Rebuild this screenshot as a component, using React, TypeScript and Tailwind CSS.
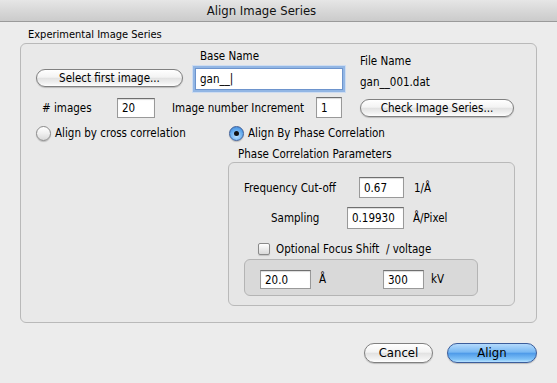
import type { ReactNode } from "react";

const font = { fontFamily: '"DejaVu Sans Condensed", "DejaVu Sans", "Liberation Sans", sans-serif' };

function AquaButton({ children, className = "", blue = false }: { children: ReactNode; className?: string; blue?: boolean }) {
  return (
    <div
      className={
        "flex shrink-0 items-center justify-center rounded-full border text-black shadow-[0_1px_1px_rgba(0,0,0,0.2)] " +
        (blue
          ? "border-[#3b5d9b] bg-[linear-gradient(#b4dafc,#78b8f3_45%,#4f9be9_52%,#7fc2f7_85%,#b8e2ff)] "
          : "border-[#808080] bg-[linear-gradient(#ffffff,#f3f3f3_45%,#e2e2e2_52%,#f3f3f3_85%,#ffffff)] ") +
        className
      }
    >
      {children}
    </div>
  );
}

function Field({ value, className = "", focused = false }: { value: string; className?: string; focused?: boolean }) {
  return (
    <div
      className={
        "flex shrink-0 items-center bg-white pl-[4px] text-black " +
        (focused
          ? "border border-[#6d94cd] shadow-[0_0_0_2px_#92b6e4,0_0_0_3px_#cddcf1] "
          : "border border-[#999999] border-t-[#6f6f6f] shadow-[inset_0_1px_1px_rgba(0,0,0,0.15)] ") +
        className
      }
    >
      {value}
    </div>
  );
}

function Radio({ on = false }: { on?: boolean }) {
  return (
    <div
      className={
        "flex h-[15px] w-[15px] shrink-0 items-center justify-center rounded-full border shadow-[0_1px_1px_rgba(0,0,0,0.2)] " +
        (on
          ? "border-[#3d5f99] bg-[radial-gradient(circle_at_50%_70%,#b9e1ff,#5ea7ec_60%,#3f7fcf)]"
          : "border-[#8a8a8a] bg-[linear-gradient(#ffffff,#efefef_50%,#d9d9d9)]")
      }
    >
      {on && <div className="h-[5px] w-[5px] rounded-full bg-[#111]" />}
    </div>
  );
}

export default function App() {
  return (
    <div className="flex h-[383px] w-[557px] flex-col overflow-hidden bg-[#ececec] text-[11.5px] leading-[14px] text-black" style={font}>
      <div className="flex h-[22px] shrink-0 items-center justify-center border-b border-[#9a9a9a] bg-[linear-gradient(#e6e6e6,#d8d8d8_50%,#cbcbcb)] pr-[34px] text-[13px] text-[#111]">
        Align Image Series
      </div>

      <div className="pl-[20px] pr-[20px]">
        <div className="ml-[8px] mt-[6px] h-[14px] text-[11px]">Experimental Image Series</div>
        <div className="mt-[1px] h-[280px] w-[517px] rounded-[6px] border border-[#b9b9b9] bg-[#e9e9e9]">
          <div className="flex items-start pt-[5px]">
            <AquaButton className="ml-[15px] mt-[20px] h-[18px] w-[147px]">Select first image...</AquaButton>
            <div className="ml-[12px] w-[148px]">
              <div className="pl-[5px]">Base Name</div>
              <Field focused value="gan__|" className="mt-[5px] h-[22px] w-[148px]" />
            </div>
            <div className="ml-[17px]">
              <div className="mt-[5px]">File Name</div>
              <div className="mt-[7px]">gan__001.dat</div>
            </div>
          </div>

          <div className="mt-[7px] flex h-[21px] items-center">
            <div className="ml-[21px] w-[75px]"># images</div>
            <Field value="20" className="h-[20px] w-[38px]" />
            <div className="ml-[17px] w-[144px]">Image number Increment</div>
            <Field value="1" className="h-[21px] w-[26px]" />
            <AquaButton className="ml-[18px] h-[18px] w-[154px]">Check Image Series...</AquaButton>
          </div>

          <div className="mt-[6px] flex h-[18px] items-center">
            <div className="ml-[15px] flex w-[193px] items-center">
              <Radio />
              <span className="ml-[4px]">Align by cross correlation</span>
            </div>
            <Radio on />
            <span className="ml-[4px]">Align By Phase Correlation</span>
          </div>

          <div className="ml-[217px] mt-[5px] h-[14px]">Phase Correlation Parameters</div>
          <div className="ml-[207px] mt-[1px] h-[144px] w-[287px] rounded-[6px] border border-[#b9b9b9] bg-[#e6e6e6]">
            <div className="mt-[14px] flex h-[21px] items-center">
              <div className="ml-[15px] w-[115px]">Frequency Cut-off</div>
              <Field value="0.67" className="h-[21px] w-[45px]" />
              <div className="ml-[10px]">1/Å</div>
            </div>
            <div className="mt-[9px] flex h-[22px] items-center">
              <div className="ml-[42px] w-[76px]">Sampling</div>
              <Field value="0.19930" className="h-[22px] w-[57px]" />
              <div className="ml-[9px]">Å/Pixel</div>
            </div>
            <div className="mt-[13px] flex h-[14px] items-center">
              <div className="ml-[29px] h-[12px] w-[12px] rounded-[2px] border border-[#8a8a8a] bg-[linear-gradient(#ffffff,#ececec_50%,#dadada)] shadow-[0_1px_1px_rgba(0,0,0,0.15)]" />
              <span className="ml-[6px] whitespace-pre">Optional Focus Shift  / voltage</span>
            </div>
            <div className="ml-[15px] mt-[3px] flex h-[37px] w-[234px] items-start rounded-[6px] border border-[#b4b4b4] bg-[#d9d9d9] pt-[10px]">
              <Field value="20.0" className="ml-[15px] h-[19px] w-[51px]" />
              <div className="ml-[8px] w-[64px] leading-[19px]">Å</div>
              <Field value="300" className="h-[19px] w-[41px]" />
              <div className="ml-[7px] leading-[19px]">kV</div>
            </div>
          </div>
        </div>

        <div className="mt-[20px] flex justify-end">
          <AquaButton className="h-[20px] w-[69px] text-[13px]">Cancel</AquaButton>
          <AquaButton blue className="ml-[14px] h-[20px] w-[90px] text-[13px]">Align</AquaButton>
        </div>
      </div>
    </div>
  );
}
